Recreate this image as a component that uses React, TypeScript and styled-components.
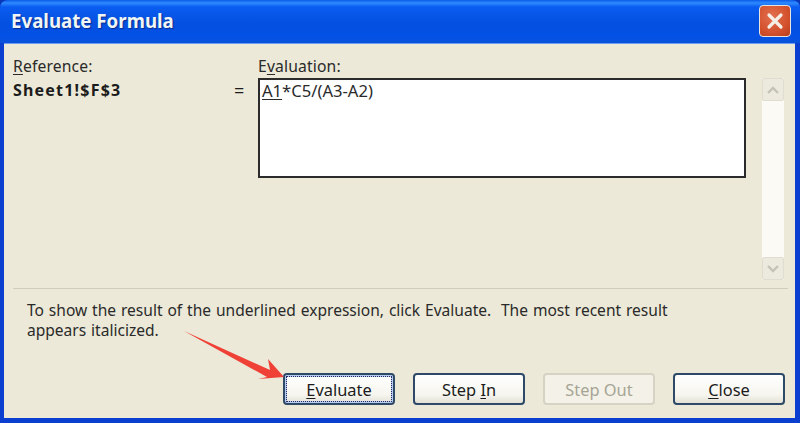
import styled, { createGlobalStyle } from "styled-components";

const GlobalStyle = createGlobalStyle`
  html, body {
    margin: 0;
    padding: 0;
    background: #0a37b8;
  }
`;

const Dialog = styled.div`
  position: relative;
  width: 800px;
  height: 423px;
  display: flex;
  flex-direction: column;
  overflow: hidden;
  font-family: "Noto Sans", "Liberation Sans", sans-serif;
  color: #1c1c1c;
  background: #0a3fd0;
  border-radius: 8px 8px 0 0;
`;

const TitleBar = styled.div`
  height: 43px;
  flex: none;
  display: flex;
  align-items: center;
  justify-content: space-between;
  box-sizing: border-box;
  padding: 0 9px 2px 11px;
  background: linear-gradient(
    180deg,
    #0a5be8 0%,
    #2f8bff 7%,
    #0a5cf0 16%,
    #0450e0 55%,
    #0351e6 85%,
    #0a52d8 100%
  );
`;

const Title = styled.div`
  font-size: 18.7px;
  font-weight: 700;
  color: #f0f6f5;
  text-shadow: 1px 1px 1px #0a2c90;
`;

const CloseBox = styled.div`
  width: 32px;
  height: 32px;
  box-sizing: border-box;
  display: flex;
  align-items: center;
  justify-content: center;
  border: 1px solid #e8e4e0;
  border-radius: 4px;
  background: radial-gradient(circle at 40% 35%, #e2704f 0%, #d4512d 60%, #b93d1e 100%);
`;

const Body = styled.div`
  flex: 1;
  margin: 0 5px 5px 4px;
  background: #ece9d8;
  display: flex;
  flex-direction: column;
  padding: 12px 7px 13px 9px;
  border-top: 1px solid #6d9df0;
`;

const TopRow = styled.div`
  display: grid;
  grid-template-columns: 221px 24px 488px 16px 22px;
  height: 232px;
  flex: none;
`;

const Column = styled.div`
  display: flex;
  flex-direction: column;
`;

const FieldLabel = styled.label`
  font-size: 15.7px;
  letter-spacing: 0.15px;
  line-height: 20px;
  height: 22px;
  color: #2a2a2a;
  u {
    text-underline-offset: 2px;
  }
`;

const SheetName = styled.div`
  margin-top: 1px;
  font-size: 16px;
  font-weight: 700;
  letter-spacing: 1.2px;
  line-height: 22px;
  color: #1c1c1c;
`;

const EqualSign = styled.div`
  font-size: 18px;
  line-height: 22px;
  margin-top: 23px;
`;

const FormulaBox = styled.div`
  height: 100px;
  box-sizing: border-box;
  border: 2px solid #2b2b2b;
  background: #fff;
  padding: 0 2px;
  font-size: 16.6px;
  line-height: 22px;
  color: #2a2a2a;
  u {
    text-underline-offset: 2px;
  }
`;

const Scrollbar = styled.div`
  grid-column: 5;
  margin-top: 22px;
  height: 202px;
  display: flex;
  flex-direction: column;
  justify-content: space-between;
  background: #fbfaf4;
`;

const ScrollButton = styled.div`
  height: 23px;
  display: flex;
  align-items: center;
  justify-content: center;
  background: #ece9de;
  border: 1px solid #e0ddd0;
  border-radius: 2px;
  box-sizing: border-box;
`;

const Divider = styled.div`
  height: 1px;
  background: #d0cdbc;
  flex: none;
`;

const Hint = styled.p`
  margin: 11px 0 0 14px;
  font-size: 15.55px;
  word-spacing: 0.85px;
  line-height: 20px;
  color: #2a2a2a;
  width: 670px;
  white-space: pre-wrap;
`;

const ButtonRow = styled.div`
  margin-top: auto;
  display: flex;
  justify-content: flex-end;
  gap: 18px;
  padding-right: 3px;
`;

const Button = styled.button<{ $focused?: boolean }>`
  width: 112px;
  height: 32px;
  box-sizing: border-box;
  padding: 0;
  font-family: inherit;
  font-size: 16.4px;
  color: ${({ disabled }) => (disabled ? "#a6a594" : "#1c1c1c")};
  border: 2px solid ${({ disabled }) => (disabled ? "#d6d3c4" : "#2f4a68")};
  border-radius: 4px;
  background: ${({ disabled }) =>
    disabled ? "#f3f1e8" : "linear-gradient(180deg, #ffffff 0%, #f6f5ef 70%, #e4e2d6 100%)"};
  outline: ${({ $focused }) => ($focused ? "1px dotted #2a2a60" : "none")};
  outline-offset: ${({ $focused }) => ($focused ? "-4px" : "0")};
  box-shadow: ${({ $focused }) => ($focused ? "inset 0 0 0 2px #b6cdf0" : "none")};
  u {
    text-underline-offset: 2px;
  }
`;

const Arrow = styled.svg`
  position: absolute;
  left: 180px;
  top: 325px;
`;

const Chevron = ({ up }: { up?: boolean }) => (
  <svg width="14" height="10" viewBox="0 0 14 10">
    <path
      d={up ? "M2 8 L7 3 L12 8" : "M2 2 L7 7 L12 2"}
      fill="none"
      stroke="#c4c3b6"
      strokeWidth="2.4"
    />
  </svg>
);

export default function App() {
  return (
    <Dialog>
      <GlobalStyle />
      <TitleBar>
        <Title>Evaluate Formula</Title>
        <CloseBox>
          <svg width="20" height="20" viewBox="0 0 20 20">
            <path
              d="M4 4 L16 16 M16 4 L4 16"
              stroke="#f6efe8"
              strokeWidth="3.2"
              strokeLinecap="round"
            />
          </svg>
        </CloseBox>
      </TitleBar>
      <Body>
        <TopRow>
          <Column>
            <FieldLabel>
              <u>R</u>eference:
            </FieldLabel>
            <SheetName>Sheet1!$F$3</SheetName>
          </Column>
          <EqualSign>=</EqualSign>
          <Column>
            <FieldLabel>
              E<u>v</u>aluation:
            </FieldLabel>
            <FormulaBox>
              <u>A1</u>*C5/(A3-A2)
            </FormulaBox>
          </Column>
          <Scrollbar>
            <ScrollButton>
              <Chevron up />
            </ScrollButton>
            <ScrollButton>
              <Chevron />
            </ScrollButton>
          </Scrollbar>
        </TopRow>
        <Divider />
        <Hint>
          {"To show the result of the underlined expression, click Evaluate.  The most recent result appears italicized."}
        </Hint>
        <ButtonRow>
          <Button $focused>
            <u>E</u>valuate
          </Button>
          <Button>
            Step <u>I</u>n
          </Button>
          <Button disabled>Step Out</Button>
          <Button>
            <u>C</u>lose
          </Button>
        </ButtonRow>
      </Body>
      <Arrow width="110" height="60" viewBox="0 0 110 60">
        <path d="M4 6 L90 45 L88 34 L104 52 L78 54 L87 52 Z" fill="#ef4136" />
      </Arrow>
    </Dialog>
  );
}
